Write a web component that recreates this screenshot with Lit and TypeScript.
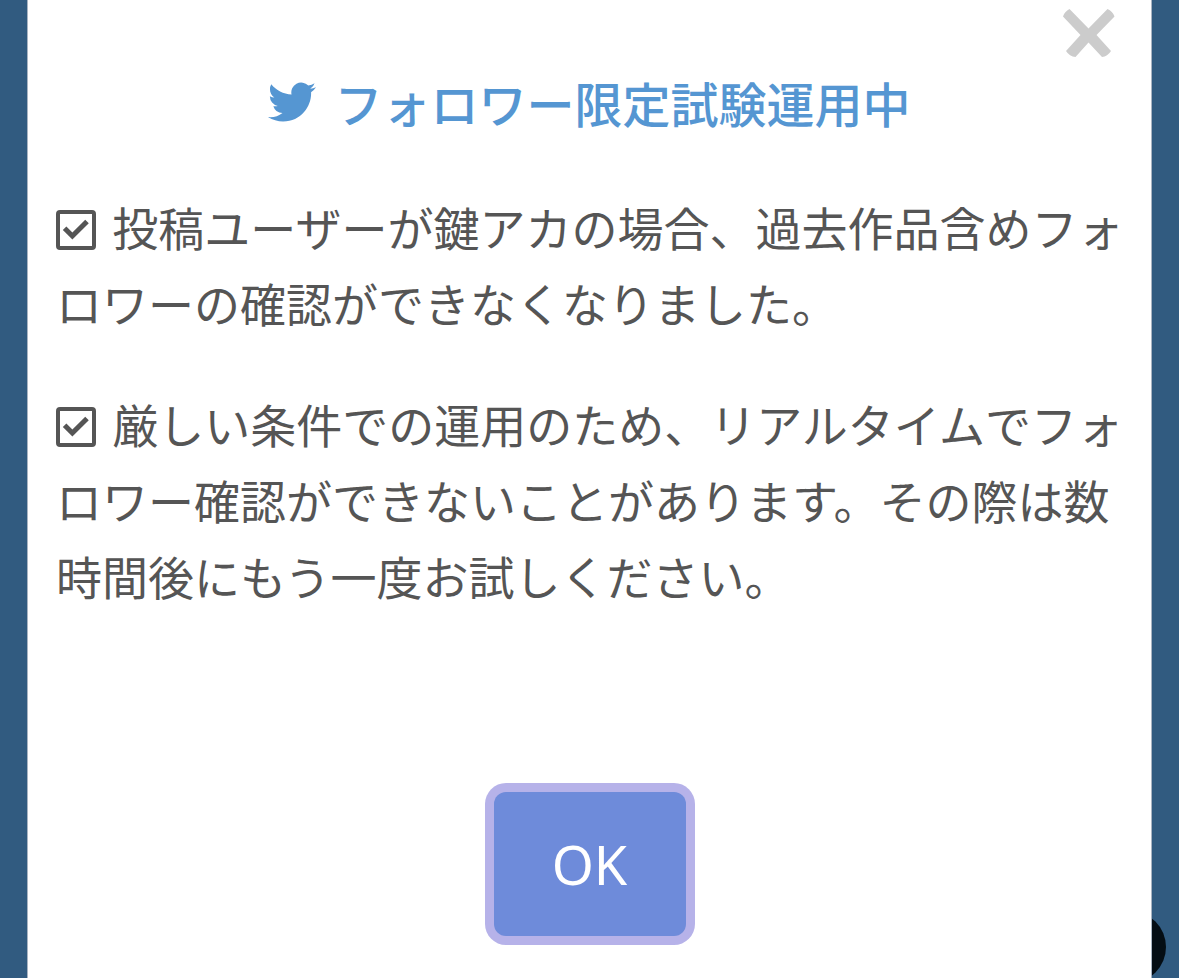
import { LitElement, html, css } from "lit";
import { customElement } from "lit/decorators.js";

@customElement("check-icon")
class CheckIcon extends LitElement {
  static styles = css`
    :host { display: inline-block; width: 40px; height: 40px; margin-right: 6px; vertical-align: -4px; }
    svg { display: block; width: 100%; height: 100%; }
  `;
  render() {
    return html`<svg viewBox="0 0 40 40" aria-hidden="true" fill="none" stroke="currentColor">
      <rect x="2" y="2" width="36" height="36" rx="2" stroke-width="4" />
      <path d="M8.6 18.2 16.4 26 31 11.4" stroke-width="5" />
    </svg>`;
  }
}

@customElement("app-root")
class AppRoot extends LitElement {
  static styles = css`
    :host {
      display: block;
      position: relative;
      box-sizing: border-box;
      min-height: 100vh;
      padding: 0 27px;
      overflow: hidden;
      background: #315b80;
      color: #555;
      font-family: "Noto Sans CJK JP", "Noto Sans", sans-serif;
    }
    .fab {
      position: absolute;
      right: 13px;
      bottom: -5px;
      width: 72px;
      height: 72px;
      border-radius: 50%;
      background: #040d14;
    }
    .modal {
      position: relative;
      box-sizing: border-box;
      display: flex;
      flex-direction: column;
      min-height: 100vh;
      padding: 8px 28px 42px;
      border: solid #a9b4c2;
      border-width: 0 1px;
      background: #fff;
    }
    .close {
      align-self: flex-end;
      display: block;
      width: 52px;
      height: 50px;
      margin-right: 8px;
      padding: 0;
      border: 0;
      background: none;
      color: #ccc;
    }
    .close svg { display: block; width: 100%; height: 100%; }
    .title {
      display: flex;
      align-items: center;
      justify-content: center;
      gap: 18px;
      margin: 8px 0 50px;
      color: #5596d2;
      font-size: 48px;
      line-height: 72px;
      font-weight: 500;
    }
    .bird { width: 48px; height: 40px; }
    .note {
      margin: 0 -4px 45px 0;
      font-size: 46px;
      line-height: 76px;
      font-weight: 400;
    }
    .actions { display: flex; justify-content: center; margin-top: auto; }
    .ok {
      width: 192px;
      height: 144px;
      padding: 0;
      border: 0;
      border-radius: 12px;
      background: #6e8bda;
      box-shadow: 0 0 0 9px #b6b2e9;
      color: #fff;
      font: 400 54px/72px "Noto Sans", sans-serif;
    }
  `;

  render() {
    return html`
      <div class="fab"></div>
      <main class="modal" role="dialog" aria-labelledby="title">
        <button class="close" type="button" aria-label="閉じる">
          <svg viewBox="0 0 52 50" fill="currentColor" aria-hidden="true">
            <path d="M6.500 1 25.500 20.500 44.500 1Q49.500 3 51.500 8.500L33.500 27 48 43Q44.500 48.500 39 49L25.500 34.500 12.500 49Q6.500 48.500 3 43L17.500 27 0 8.500Q1.500 3.500 6.500 1Z" />
          </svg>
        </button>
        <h1 class="title" id="title">
          <svg class="bird" viewBox="0 2 24 20" fill="currentColor" aria-hidden="true">
            <path d="M23.953 4.570a10 10 0 01-2.825.775 4.958 4.958 0 002.163-2.723c-.951.555-2.005.959-3.127 1.184a4.920 4.920 0 00-8.384 4.482C7.690 8.095 4.067 6.130 1.640 3.162a4.822 4.822 0 00-.666 2.475c0 1.710.870 3.213 2.188 4.096a4.904 4.904 0 01-2.228-.616v.060a4.923 4.923 0 003.946 4.827 4.996 4.996 0 01-2.212.085 4.936 4.936 0 004.604 3.417 9.867 9.867 0 01-6.102 2.105c-.390 0-.779-.023-1.170-.067a13.995 13.995 0 007.557 2.209c9.053 0 13.998-7.496 13.998-13.985 0-.210 0-.420-.015-.630A9.935 9.935 0 0024 4.590z" />
          </svg>
          <span>フォロワー限定試験運用中</span>
        </h1>
        <p class="note"><check-icon></check-icon> 投稿ユーザーが鍵アカの場合、過去作品含めフォロワーの確認ができなくなりました。</p>
        <p class="note"><check-icon></check-icon> 厳しい条件での運用のため、リアルタイムでフォロワー確認ができないことがあります。その際は数時間後にもう一度お試しください。</p>
        <div class="actions"><button class="ok" type="button">OK</button></div>
      </main>
    `;
  }
}
